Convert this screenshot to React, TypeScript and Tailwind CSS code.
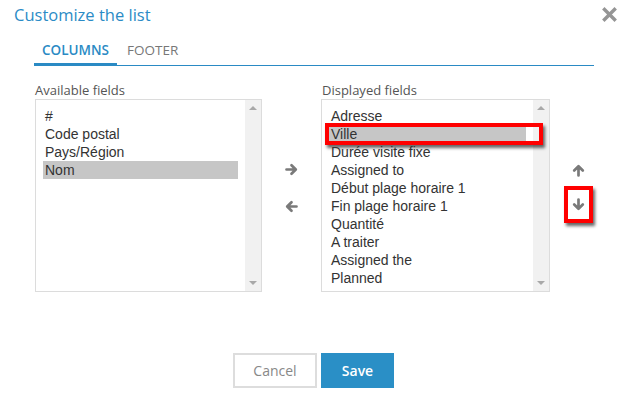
import React from "react";

const available = ["#", "Code postal", "Pays/Région", "Nom"];
const displayed = [
  "Adresse",
  "Ville",
  "Durée visite fixe",
  "Assigned to",
  "Début plage horaire 1",
  "Fin plage horaire 1",
  "Quantité",
  "A traiter",
  "Assigned the",
  "Planned",
];

function Arrow({ dir }: { dir: "left" | "right" | "up" | "down" }) {
  const rot = { right: 0, down: 90, left: 180, up: 270 }[dir];
  return (
    <svg width="13" height="13" viewBox="0 0 13 13" style={{ transform: `rotate(${rot}deg)` }}>
      <path
        d="M1.5 6.5h9 M6.5 2.2l4.3 4.3-4.3 4.3"
        fill="none"
        stroke="#7a7a7a"
        strokeWidth="2.7"
        strokeLinecap="round"
        strokeLinejoin="round"
      />
    </svg>
  );
}

function Scrollbar() {
  return (
    <div className="w-[16px] bg-[#f1f1f1] flex flex-col items-center justify-between pt-[6px] pb-[6px]">
      <div className="w-0 h-0 border-l-[4px] border-r-[4px] border-b-[4px] border-l-transparent border-r-transparent border-b-[#a8a8a8]" />
      <div className="w-0 h-0 border-l-[4px] border-r-[4px] border-t-[4px] border-l-transparent border-r-transparent border-t-[#a8a8a8]" />
    </div>
  );
}

function ListBox({
  items,
  selected,
  marked,
}: {
  items: string[];
  selected: string;
  marked?: boolean;
}) {
  return (
    <div className="h-[193px] border border-[#dcdcdc] flex bg-white">
      <div className="flex-1 p-[7px] font-['Liberation_Sans',Arial,sans-serif] text-[14px] text-[#333]">
        {items.map((it) => (
          <div
            key={it}
            className={`relative h-[18px] leading-[18px] pl-[2px] whitespace-nowrap ${
              it === selected ? "bg-[#c6c6c6]" : ""
            }`}
          >
            {it}
            {marked && it === selected && (
              <div className="absolute left-[-4px] right-[-17px] top-[-2px] bottom-[-2px] border-[4px] border-[#ff0000] shadow-[2px_3px_3px_rgba(0,0,0,0.6)]" />
            )}
          </div>
        ))}
      </div>
      <Scrollbar />
    </div>
  );
}

export default function App() {
  return (
    <div className="w-[627px] h-[406px] bg-white font-['Open_Sans',sans-serif] overflow-hidden">
      <div className="flex items-start justify-between pl-[14px] pr-[10px] h-[30px]">
        <h1 className="text-[16.5px] leading-[24px] pt-[3px] text-[#2b8bc6]">Customize the list</h1>
        <svg width="15" height="15" viewBox="0 0 15 15" className="mt-[7px]">
          <path d="M2.5 2.5l10 10M12.5 2.5l-10 10" stroke="#959595" strokeWidth="3.4" strokeLinecap="square" />
        </svg>
      </div>

      <div className="mt-[10px] ml-[34px] mr-[33px] flex border-b border-[#2a8ac4] text-[13.5px] leading-[20px]">
        <div className="px-[8px] pb-[3px] border-b-[3px] border-[#2a8ac4] -mb-px font-semibold text-[#2a8ac4]">
          COLUMNS
        </div>
        <div className="px-[10px] pb-[3px] text-[#777]">FOOTER</div>
      </div>

      <div className="flex mt-[16px] pl-[35px]">
        <div className="w-[227px]">
          <div className="h-[17px] text-[13px] leading-[17px] text-[#555]">Available fields</div>
          <ListBox items={available} selected="Nom" />
        </div>

        <div className="w-[59px] flex flex-col items-center pt-[81px] gap-[24px]">
          <Arrow dir="right" />
          <Arrow dir="left" />
        </div>

        <div className="w-[229px]">
          <div className="h-[17px] text-[13px] leading-[17px] text-[#555] pl-[1px]">Displayed fields</div>
          <ListBox items={displayed} selected="Ville" marked />
        </div>

        <div className="pl-[13px] pt-[82px] flex flex-col items-center">
          <div className="w-[31px] flex justify-center">
            <Arrow dir="up" />
          </div>
          <div className="mt-[9px] w-[29px] h-[37px] border-[4px] border-[#ff0000] shadow-[2px_3px_3px_rgba(0,0,0,0.6)] flex items-center justify-center">
            <Arrow dir="down" />
          </div>
        </div>
      </div>

      <div className="flex justify-center gap-[4px] mt-[61px]">
        <button className="w-[84px] h-[35px] border-2 border-[#dddddd] bg-white text-[14px] text-[#888]">
          Cancel
        </button>
        <button className="w-[73px] h-[35px] bg-[#2a8fc6] text-[14px] font-semibold text-white">
          Save
        </button>
      </div>
    </div>
  );
}
